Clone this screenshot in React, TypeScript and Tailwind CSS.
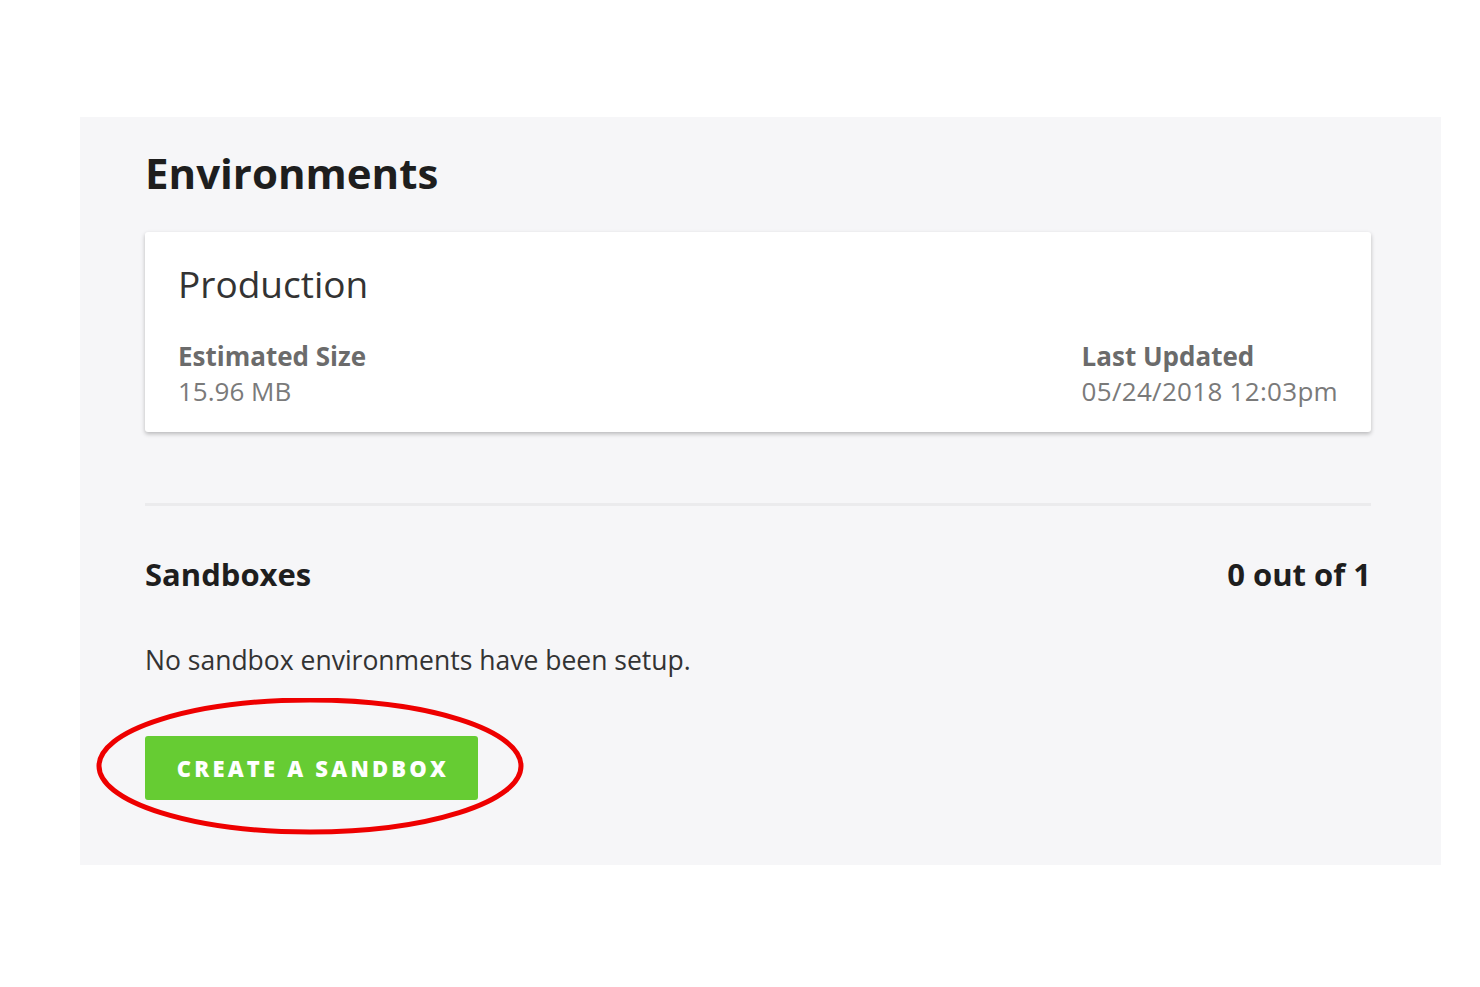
import React from "react";

export default function App() {
  return (
    <div className="min-h-[987px] w-[1480px] bg-white pt-[117px] pl-[80px]" style={{ fontFamily: "'Open Sans', 'Noto Sans', sans-serif" }}>
      <div className="w-[1361px] h-[748px] bg-[#f6f6f8] pl-[65px] pr-[70px] pt-[30px]">
        <h1 className="text-[42px] leading-[52px] font-bold text-[#1e1e1e]">Environments</h1>
        <div className="mt-[33px] h-[200px] bg-white rounded-[3px] shadow-[0_2px_4px_rgba(0,0,0,0.25)] pl-[33px] pr-[33px] pt-[28px]">
          <div className="text-[37px] leading-[48px] text-[#333] font-normal">Production</div>
          <div className="mt-[31px] flex justify-between">
            <div>
              <div className="text-[26px] leading-[35px] font-bold text-[#6b6b6b]">Estimated Size</div>
              <div className="text-[26px] leading-[35px] text-[#7a7a7a]">15.96 MB</div>
            </div>
            <div>
              <div className="text-[26px] leading-[35px] font-bold text-[#6b6b6b]">Last Updated</div>
              <div className="text-[26px] leading-[35px] tracking-[0.3px] text-[#7a7a7a]">05/24/2018 12:03pm</div>
            </div>
          </div>
        </div>
        <div className="mt-[71px] h-[3px] bg-[#ebebed]" />
        <div className="mt-[48px] flex justify-between items-baseline">
          <div className="text-[31px] leading-[40px] font-bold text-[#1e1e1e]">Sandboxes</div>
          <div className="text-[31px] leading-[40px] font-bold text-[#1e1e1e]">0 out of 1</div>
        </div>
        <div className="mt-[49px] text-[26.5px] leading-[34px] text-[#333]">No sandbox environments have been setup.</div>
        <div className="relative mt-[59px] w-[333px]">
          <button className="h-[64px] w-[333px] bg-[#66cc33] rounded-[3px] text-white font-extrabold text-[22px] tracking-[3.2px] uppercase pl-[3px]">
            Create a Sandbox
          </button>
          <svg className="absolute left-[-50px] top-[-38px] pointer-events-none" width="430" height="140" viewBox="0 0 430 140">
            <ellipse cx="215" cy="68" rx="211" ry="66" fill="none" stroke="#ee0000" strokeWidth="5" />
          </svg>
        </div>
      </div>
    </div>
  );
}
